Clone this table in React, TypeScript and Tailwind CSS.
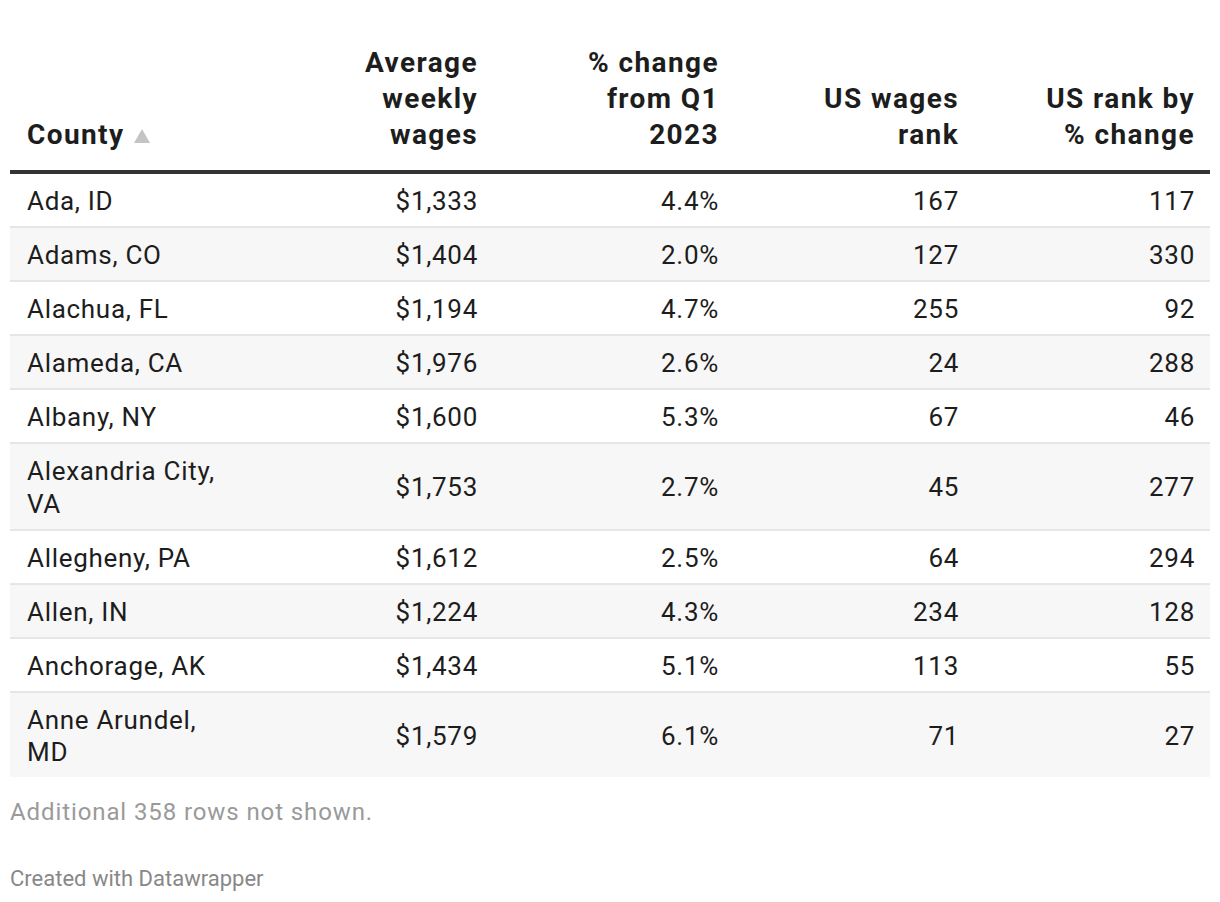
const rows = [
  { county: 'Ada, ID', wages: '$1,333', change: '4.4%', rank: '167', changeRank: '117' },
  { county: 'Adams, CO', wages: '$1,404', change: '2.0%', rank: '127', changeRank: '330' },
  { county: 'Alachua, FL', wages: '$1,194', change: '4.7%', rank: '255', changeRank: '92' },
  { county: 'Alameda, CA', wages: '$1,976', change: '2.6%', rank: '24', changeRank: '288' },
  { county: 'Albany, NY', wages: '$1,600', change: '5.3%', rank: '67', changeRank: '46' },
  { county: 'Alexandria City, VA', wages: '$1,753', change: '2.7%', rank: '45', changeRank: '277' },
  { county: 'Allegheny, PA', wages: '$1,612', change: '2.5%', rank: '64', changeRank: '294' },
  { county: 'Allen, IN', wages: '$1,224', change: '4.3%', rank: '234', changeRank: '128' },
  { county: 'Anchorage, AK', wages: '$1,434', change: '5.1%', rank: '113', changeRank: '55' },
  { county: 'Anne Arundel, MD', wages: '$1,579', change: '6.1%', rank: '71', changeRank: '27' },
]

const cols = 'grid grid-cols-[240px_240px_240px_240px_240px]'

export default function App() {
  return (
    <div className="min-h-screen bg-white px-[10px] text-[#1d1d1d]" style={{ fontFamily: 'Roboto, "Liberation Sans", sans-serif' }}>
      {/* Kopfzeile */}
      <div className={`${cols} items-end border-b-4 border-[#333333] pt-[45px] pb-[17px] text-[28px] font-bold leading-[36px] tracking-[1.4px]`}>
        <div className="flex items-center gap-[10px] pl-[17px]">
          County
          <svg width="16" height="14" viewBox="0 0 16 14" className="mt-[2px]">
            <polygon points="8,0 16,14 0,14" fill="#c4c4c4" />
          </svg>
        </div>
        <div className="pr-[12px] text-right">Average<br />weekly<br />wages</div>
        <div className="pr-[11px] text-right">% change<br />from Q1<br />2023</div>
        <div className="pr-[11px] text-right">US wages<br />rank</div>
        <div className="pr-[15px] text-right">US rank by<br />% change</div>
      </div>

      {/* Zeilen */}
      {rows.map((r, i) => (
        <div
          key={r.county}
          className={`${cols} items-center pt-[11px] pb-[8.5px] text-[26px] leading-[32.5px] tracking-[0.7px] ${i % 2 === 1 ? 'bg-[#f7f7f7]' : 'bg-white'} ${i < rows.length - 1 ? 'border-b-2 border-[#e6e6e6]' : ''}`}
        >
          <div className="pl-[17px] pr-[20px]">{r.county}</div>
          <div className="pr-[12px] text-right">{r.wages}</div>
          <div className="pr-[11px] text-right">{r.change}</div>
          <div className="pr-[11px] text-right">{r.rank}</div>
          <div className="pr-[15px] text-right">{r.changeRank}</div>
        </div>
      ))}

      <div className="pt-[20px] text-[24px] leading-[30px] tracking-[0.9px] text-[#9a9a9a]">Additional 358 rows not shown.</div>
      <div className="pt-[38px] text-[22px] leading-[28px] text-[#888888]">Created with Datawrapper</div>
    </div>
  )
}
